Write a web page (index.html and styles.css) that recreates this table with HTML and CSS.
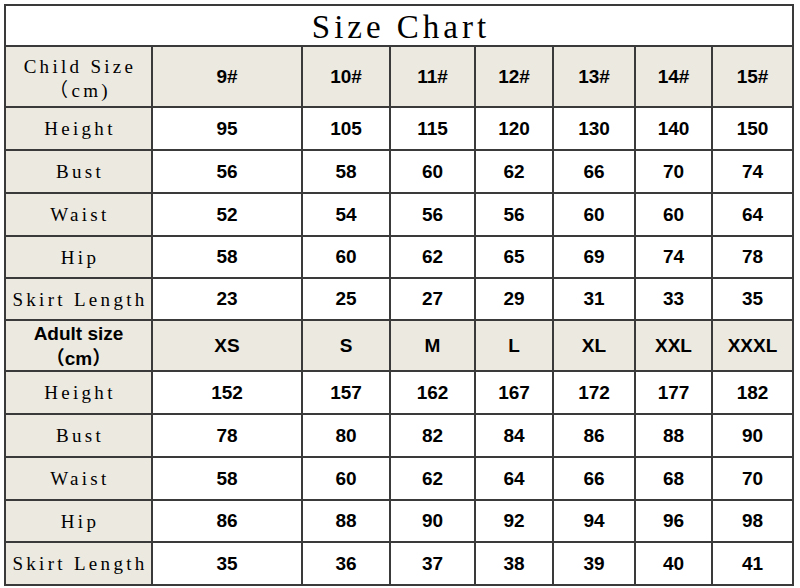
FILE: index.html
```html
<!DOCTYPE html>
<html>
<head>
<meta charset="utf-8">
<link rel="stylesheet" href="styles.css">
</head>
<body>
<div class="chart">
  <div class="title">Size Chart</div>

  <div class="lab head child">Child Size<br>（cm)</div>
  <div class="num head">9#</div><div class="num head">10#</div><div class="num head">11#</div><div class="num head">12#</div><div class="num head">13#</div><div class="num head">14#</div><div class="num head">15#</div>

  <div class="lab">Height</div>
  <div class="num">95</div><div class="num">105</div><div class="num">115</div><div class="num">120</div><div class="num">130</div><div class="num">140</div><div class="num">150</div>

  <div class="lab">Bust</div>
  <div class="num">56</div><div class="num">58</div><div class="num">60</div><div class="num">62</div><div class="num">66</div><div class="num">70</div><div class="num">74</div>

  <div class="lab">Waist</div>
  <div class="num">52</div><div class="num">54</div><div class="num">56</div><div class="num">56</div><div class="num">60</div><div class="num">60</div><div class="num">64</div>

  <div class="lab">Hip</div>
  <div class="num">58</div><div class="num">60</div><div class="num">62</div><div class="num">65</div><div class="num">69</div><div class="num">74</div><div class="num">78</div>

  <div class="lab">Skirt Length</div>
  <div class="num">23</div><div class="num">25</div><div class="num">27</div><div class="num">29</div><div class="num">31</div><div class="num">33</div><div class="num">35</div>

  <div class="head adult">Adult size<br>（cm）</div>
  <div class="num head">XS</div><div class="num head">S</div><div class="num head">M</div><div class="num head">L</div><div class="num head">XL</div><div class="num head">XXL</div><div class="num head">XXXL</div>

  <div class="lab">Height</div>
  <div class="num">152</div><div class="num">157</div><div class="num">162</div><div class="num">167</div><div class="num">172</div><div class="num">177</div><div class="num">182</div>

  <div class="lab">Bust</div>
  <div class="num">78</div><div class="num">80</div><div class="num">82</div><div class="num">84</div><div class="num">86</div><div class="num">88</div><div class="num">90</div>

  <div class="lab">Waist</div>
  <div class="num">58</div><div class="num">60</div><div class="num">62</div><div class="num">64</div><div class="num">66</div><div class="num">68</div><div class="num">70</div>

  <div class="lab">Hip</div>
  <div class="num">86</div><div class="num">88</div><div class="num">90</div><div class="num">92</div><div class="num">94</div><div class="num">96</div><div class="num">98</div>

  <div class="lab">Skirt Length</div>
  <div class="num">35</div><div class="num">36</div><div class="num">37</div><div class="num">38</div><div class="num">39</div><div class="num">40</div><div class="num">41</div>
</div>
</body>
</html>
```
FILE: styles.css
```css
html, body {
  margin: 0;
  padding: 0;
  background: #ffffff;
}

.chart {
  margin: 4px 0 0 4px;
  width: 790px;
  box-sizing: border-box;
  display: grid;
  grid-template-columns: 145px 148px 86px 83px 76px 80px 75px 79px;
  grid-template-rows: 39px 59px 41px 41px 41px 40px 40px 49px 41px 41px 41px 40px 41px;
  gap: 2px;
  padding: 2px;
  background: #3a3a3a;
}

.chart > div {
  display: flex;
  align-items: center;
  justify-content: center;
  text-align: center;
  background: #ffffff;
  color: #000;
}

.title {
  grid-column: 1 / -1;
  font-family: "Liberation Serif", "Times New Roman", serif;
  font-size: 33px;
  letter-spacing: 4px;
  padding-left: 4px;
  padding-top: 3px;
}

.lab {
  background: #ece9e1 !important;
  font-family: "Liberation Serif", "Noto Sans CJK SC", serif;
  font-size: 19px;
  letter-spacing: 3.3px;
  padding-left: 3px;
  line-height: 24px;
  padding-top: 1px;
}

.lab.child {
  padding-top: 4px;
}

.num {
  font-family: "Liberation Sans", Arial, sans-serif;
  font-weight: bold;
  font-size: 19px;
}

.head {
  background: #ece9e1 !important;
}

.adult {
  font-family: "Liberation Sans", "Noto Sans CJK SC", sans-serif;
  font-weight: bold;
  font-size: 19px;
  line-height: 25px;
  padding-top: 1px;
}
```
